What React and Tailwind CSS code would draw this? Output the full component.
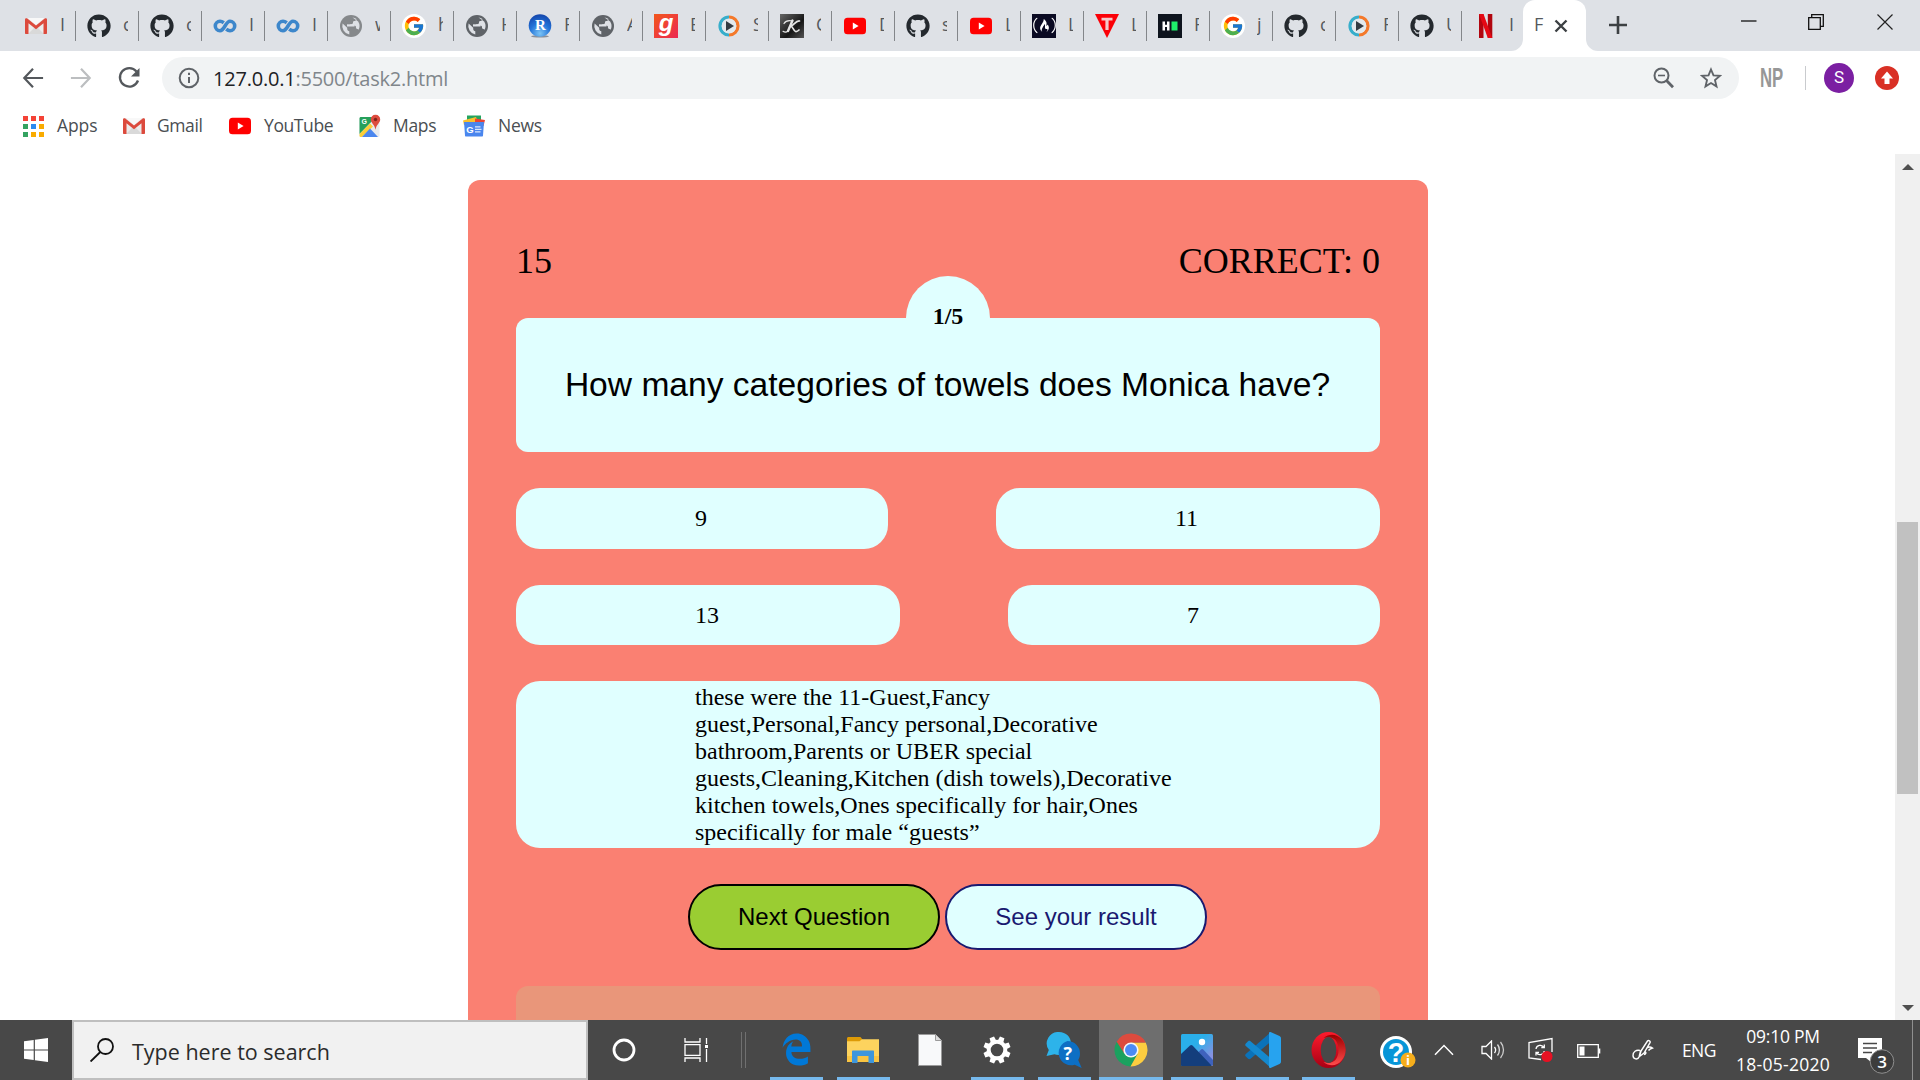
import React from "react";
import { FaGithub, FaEdgeLegacy, FaFreeCodeCamp } from "react-icons/fa6";
import { FcGoogle } from "react-icons/fc";

const ui = "font-['Open_Sans','Noto_Sans',sans-serif]";

/* ---------- favicons ---------- */
const Gmail = () => (
  <svg viewBox="0 0 24 24" className="size-6">
    <rect x="2" y="4" width="20" height="16" rx="1" fill="#ececec" />
    <path d="M4 20 12 12l8 8z" fill="#d9d9d9" />
    <path d="M4 4h16l-8 7z" fill="#f8f8f8" />
    <path d="M1 5.500C1 4.500 2 4 3 4.300l9 7.200 9-7.200c1-.3 2 .2 2 1.200V19c0 .6-.4 1-1 1h-2.500V9.200l-7.500 6-7.500-6V20H2c-.6 0-1-.4-1-1z" fill="#dc4a3d" />
  </svg>
);
const Github = () => <FaGithub className="size-6 text-[#24292e]" />;
const Coursera = () => (
  <svg viewBox="0 0 24 24" className="size-6" fill="none" stroke="#3d87cb" strokeWidth="3.600">
    <path d="M10.800 8.800C9.600 7.900 8.500 7.300 7 7.300a4.700 4.700 0 0 0 0 9.400c4.600 0 5.400-9.400 10-9.400a4.700 4.700 0 0 1 0 9.400c-1.500 0-2.700-.6-3.800-1.500" />
  </svg>
);
const Globe = ({ light }) => (
  <svg viewBox="0 0 24 24" className="size-6">
    <circle cx="12" cy="12" r="11" fill={light ? "#85888b" : "#5f6368"} />
    <path d="M3.600 9.500l4.600 4.300v1.200c0 1.200.9 2 2.100 2.200v3.300A8.800 8.800 0 0 1 3.600 9.500z" fill="#dee1e6" />
    <path d="M13.500 3.400c1.500.2 2.900.8 4 1.600-.2 1.300-1.100 2-2.400 2.100-.9.100-1.100.5-1.100 1.300 0 1.300-.7 1.700-2 1.800-.7 0-1 .4-1 1.400h4.200c1.200 0 1.800.7 1.800 1.900 0 1 .5 1.300 1.300 1.400.6.100 1 .4 1.300.9a8.800 8.800 0 0 0-.4-8.300" fill="#dee1e6" />
    <path d="M8 10.300h7.500v2.200H8z" fill="#dee1e6" />
  </svg>
);
const Google = () => (
  <span className="flex size-6 items-center justify-center rounded-full bg-white">
    <FcGoogle className="size-[22px]" />
  </span>
);
const RStudio = () => (
  <svg viewBox="0 0 24 24" className="size-6">
    <defs>
      <radialGradient id="rs" cx=".5" cy=".85" r=".9">
        <stop offset="0" stopColor="#7cc4f5" />
        <stop offset=".5" stopColor="#2273d8" />
        <stop offset="1" stopColor="#123fa5" />
      </radialGradient>
    </defs>
    <ellipse cx="12" cy="22.300" rx="9" ry="1.300" fill="#8a8f98" />
    <circle cx="12" cy="11.500" r="11.300" fill="url(#rs)" />
    <text x="12.500" y="16" textAnchor="middle" fontSize="15" fontWeight="700" fill="#fff" fontFamily="Liberation Serif, serif">R</text>
  </svg>
);
const Gaana = () => (
  <svg viewBox="0 0 24 24" className="size-6">
    <defs>
      <linearGradient id="ga" x1="0" y1="0" x2="1" y2="1">
        <stop offset="0" stopColor="#f2571c" />
        <stop offset="1" stopColor="#ec2852" />
      </linearGradient>
    </defs>
    <rect width="24" height="24" fill="url(#ga)" />
    <text x="12" y="16.500" textAnchor="middle" fontSize="24" fontWeight="700" fontStyle="italic" fill="#fff" fontFamily="Liberation Sans, sans-serif">g</text>
  </svg>
);
const Player = () => (
  <svg viewBox="0 0 24 24" className="size-6">
    <path d="M12 3A9 9 0 0 0 12 21" fill="none" stroke="#37aecb" strokeWidth="3.200" />
    <path d="M12 3A9 9 0 0 1 12 21" fill="none" stroke="#f4792b" strokeWidth="3.200" />
    <circle cx="12" cy="12" r="7.300" fill="#e3e9ec" />
    <path d="M9 7 17 12l-8 5z" fill="#333b41" />
  </svg>
);
const ScriptK = () => (
  <svg viewBox="0 0 24 24" className="size-6">
    <defs>
      <linearGradient id="kx" x1="0" y1="0" x2="1" y2="1">
        <stop offset="0" stopColor="#666" />
        <stop offset=".6" stopColor="#161616" />
        <stop offset="1" stopColor="#555" />
      </linearGradient>
    </defs>
    <rect width="24" height="24" fill="url(#kx)" />
    <g fill="none" stroke="#e6e6e6" strokeLinecap="round">
      <path d="M12.500 6.500 8 17" strokeWidth="2.400" />
      <path d="M19.500 7c-3-.5-5 3-8.500 5.500 2 0 2.500 4.500 4.500 5 1.500.3 2.500-.5 3.500-1.500" strokeWidth="1.700" />
      <path d="M4 9.500c2-3.500 6-3 8.500-2.500M8 17c-1.500 1.300-3.500 1.300-5 .3" strokeWidth="1.200" />
    </g>
  </svg>
);
const YouTube = () => (
  <svg viewBox="0 0 24 24" className="size-6">
    <rect x="1" y="3.800" width="22" height="16.400" rx="3.500" fill="#f00" />
    <path d="M9.800 8.600 15.600 12l-5.800 3.400z" fill="#fff" />
  </svg>
);
const FreeCodeCamp = () => (
  <span className="flex size-6 items-center justify-center bg-[#0a0a23]">
    <FaFreeCodeCamp className="size-[23px] text-white" />
  </span>
);
const Triangle = () => (
  <svg viewBox="0 0 24 24" className="size-6">
    <path d="M0 0h24L12 24z" fill="#fb0007" />
    <path d="M6.500 3.800h11v2.600h-3.900V16h-3.200V6.400H6.500z" fill="#f3c9ca" />
  </svg>
);
const Hacker = () => (
  <svg viewBox="0 0 24 24" className="size-6">
    <rect width="24" height="24" fill="#0e141e" />
    <path d="M4.500 7.500h2.500v3.300h2V7.500h2.500v9H9v-3.400H7v3.400H4.500z" fill="#fff" />
    <rect x="13.500" y="7.500" width="6" height="9" fill="#1ef06a" />
  </svg>
);
const Netflix = () => (
  <svg viewBox="0 0 24 24" className="size-6">
    <path d="M6 0h4.500v24L6 24zM14.800 0h4.500v24h-4.500z" fill="#b1060f" />
    <path d="M6 0h4.500l8.800 24h-4.500z" fill="#e50914" />
  </svg>
);

const tabs = [
  [Gmail, "I"], [Github, "c"], [Github, "c"], [Coursera, "I"], [Coursera, "I"],
  [() => <Globe light />, "w"], [Google, "h"], [Globe, "H"], [RStudio, "F"], [Globe, "A"],
  [Gaana, "E"], [Player, "S"], [ScriptK, "C"], [YouTube, "D"], [Github, "s"],
  [YouTube, "L"], [FreeCodeCamp, "L"], [Triangle, "L"], [Hacker, "F"], [Google, "j"],
  [Github, "c"], [Player, "F"], [Github, "U"], [Netflix, "I"],
];

function TabStrip() {
  return (
    <div className="flex h-[51px] w-full shrink-0 bg-[#dee1e6] pl-[12px]">
      {tabs.map(([Icon, letter], i) => (
        <div key={i} className="flex h-[51px] w-[63px] shrink-0 items-center">
          <div className={"h-[30px] w-[1px] " + (i ? "bg-[#83868a]" : "")} />
          <div className="ml-[11px] flex size-6 shrink-0 items-center"><Icon /></div>
          <div className={ui + " ml-[12px] h-[26px] w-[5px] overflow-hidden text-[18px] leading-[23px] text-[#55595d]"}>{letter}</div>
        </div>
      ))}
      <div className="relative -ml-px flex h-[51px] w-[63px] items-center rounded-t-[12px] bg-white pl-[11px]">
        <svg viewBox="0 0 12 12" className="absolute bottom-0 -left-[12px] size-3"><path d="M12 0v12H0A12 12 0 0 0 12 0" fill="#fff" /></svg>
        <svg viewBox="0 0 12 12" className="absolute bottom-0 -right-[12px] size-3"><path d="M0 0v12h12A12 12 0 0 1 0 0" fill="#fff" /></svg>
        <span className={ui + " w-[19px] pb-[3px] text-[18px] leading-[24px] text-[#55595d]"}>F</span>
        <svg viewBox="0 0 14 14" className="ml-px size-[14px]"><path d="M1.500 1.500l11 11m0-11l-11 11" stroke="#3c4043" strokeWidth="2.400" /></svg>
      </div>
      <svg viewBox="0 0 20 20" className="mt-[15px] ml-[22px] size-5"><path d="M10 1v18M1 10h18" stroke="#3c4043" strokeWidth="2.600" /></svg>
      <svg viewBox="0 0 16 16" className="mt-[12.500px] ml-[113px] size-4"><path d="M0 8h15.500" stroke="#111" strokeWidth="1.300" /></svg>
      <svg viewBox="0 0 16 16" className="mt-[14px] ml-[51px] size-4" fill="none" stroke="#111" strokeWidth="1.300"><path d="M.7 3.700h11.600v11.600H.7zM3.700 3.700V.7h11.600v11.600h-3" /></svg>
      <svg viewBox="0 0 16 16" className="mt-[13.500px] ml-[53px] size-4"><path d="M.5.5l15 15m0-15l-15 15" stroke="#222" strokeWidth="1.200" /></svg>
    </div>
  );
}

function Toolbar() {
  return (
    <div className="flex h-[54px] shrink-0 items-center pl-[22px]">
      <svg viewBox="0 0 24 24" className="size-[22px]" fill="none" stroke="#54585c" strokeWidth="2.400"><path d="M23 12H3M12 2 2.500 12 12 22" /></svg>
      <svg viewBox="0 0 24 24" className="ml-[26px] size-[22px]" fill="none" stroke="#bcbec0" strokeWidth="2.400"><path d="M1 12h20M12 2l9.500 10L12 22" /></svg>
      <svg viewBox="0 0 24 24" className="ml-[25px] size-[24px]" fill="none" stroke="#54585c" strokeWidth="2.300"><path d="M19.500 5.500A9.300 9.300 0 1 0 21 14.500" /><path d="M22.500 2v8.500H14z" fill="#54585c" stroke="none" /></svg>
      <div className="ml-[21px] flex h-[42px] w-[1577px] items-center rounded-full bg-[#f1f3f4] pl-[16px]">
        <svg viewBox="0 0 22 22" className="size-[22px]" fill="none" stroke="#5f6368" strokeWidth="2"><circle cx="11" cy="11" r="9.300" /><path d="M11 10v6M11 5.800v2.300" /></svg>
        <span className={ui + " ml-[13px] w-[234px] whitespace-nowrap pt-px text-[20px] tracking-[-0.22px] text-[#80868b]"}><span className="text-[#202124]">127.0.0.1</span>:5500/task2.html</span>
        <svg viewBox="0 0 22 22" className="ml-[1206px] size-[22px]" fill="none" stroke="#5f6368"><circle cx="8.500" cy="8.500" r="7" strokeWidth="2" /><path d="M5 8.500h7" strokeWidth="1.600" /><path d="M13.500 13.500l6.500 6.700" strokeWidth="2.800" /></svg>
        <svg viewBox="0 0 22 22" className="ml-[25px] size-[22px]" fill="none" stroke="#5f6368" strokeWidth="1.900"><path d="M11 2.500l2.500 5.900 6.300.5-4.800 4.200 1.500 6.300L11 16l-5.500 3.400L7 13.100 2.200 8.900l6.300-.5z" /></svg>
      </div>
      <span className="ml-[21px] w-[24px] origin-left scale-x-[0.62] font-['Liberation_Sans',sans-serif] text-[27px] leading-none font-bold text-[#979797]">NP</span>
      <span className="ml-[21px] h-[24px] w-px bg-[#c9cbce]" />
      <span className="ml-[18px] flex size-[30px] items-center justify-center rounded-full bg-[#7b1fa2] font-['Roboto',sans-serif] text-[17px] text-white">S</span>
      <svg viewBox="0 0 24 24" className="ml-[21px] size-6"><circle cx="12" cy="12" r="12" fill="#d93025" /><path d="M12 5.500l6 7h-3.500V18h-5v-5.500H6z" fill="#fff" /></svg>
    </div>
  );
}

const appColors = ["#f44336", "#f44336", "#f44336", "#34a361", "#2a8af0", "#f9ab00", "#34a361", "#f9ab00", "#f9ab00"];

function Bookmark({ icon, label, w, tight }) {
  return (
    <div className={"flex shrink-0 items-center " + w}>
      <div className="flex size-6 shrink-0 items-center justify-center">{icon}</div>
      <span className={ui + " whitespace-nowrap pb-[2px] text-[17.500px] leading-6 text-[#4a4e52] " + tight}>{label}</span>
    </div>
  );
}

function Bookmarks() {
  return (
    <div className="flex h-[42px] shrink-0 items-center pl-[21px]">
      <Bookmark label="Apps" w="w-[101px]" tight="ml-[12px] tracking-[-0.1px]" icon={
        <div className="grid grid-cols-3 gap-[3px]">{appColors.map((c, i) => <span key={i} className="size-[5px]" style={{ background: c }} />)}</div>
      } />
      <Bookmark label="Gmail" w="w-[106px]" tight="ml-[11px] tracking-[-0.4px]" icon={<Gmail />} />
      <Bookmark label="YouTube" w="w-[130px]" tight="ml-[12px] tracking-[-0.4px]" icon={<YouTube />} />
      <Bookmark label="Maps" w="w-[104px]" tight="ml-[11px] tracking-[-0.3px]" icon={
        <svg viewBox="0 0 24 24" className="size-6">
          <rect x="1.500" y="3" width="20" height="20" rx="1.500" fill="#e8eaed" />
          <path d="M1.500 4.500C1.500 3.500 2 3 3 3h15L1.500 20z" fill="#26a05b" />
          <path d="M1.500 20 12 9.500l3 3L4 23H3c-1 0-1.500-.5-1.500-1.500z" fill="#fbcf38" />
          <path d="M4 23l8-8.500L20 23z" fill="#4a86ee" />
          <text x="3.500" y="10" fontSize="7" fontWeight="700" fill="#fff" fontFamily="Liberation Sans, sans-serif">G</text>
          <path d="M17.500.8c2.900 0 4.700 2.100 4.700 4.700 0 3.600-3.900 4.700-4.700 10.300-.8-5.600-4.700-6.700-4.700-10.300 0-2.600 1.800-4.700 4.700-4.700z" fill="#dd4b3e" />
          <circle cx="17.500" cy="5.500" r="1.700" fill="#7d231b" />
        </svg>
      } />
      <Bookmark label="News" w="w-[100px]" tight="ml-[12px] tracking-[-0.3px]" icon={
        <svg viewBox="0 0 24 24" className="size-6">
          <path d="M5 1.500h14v8H5z" fill="#24a45f" />
          <path d="M1 6.500l13-3.500 3 8H2z" fill="#fbc02d" />
          <path d="M13 4.500l10 1.500L21.500 12H13z" fill="#ea4435" />
          <path d="M2 8h20l-1 13.500c0 .6-.4 1-1 1H4c-.6 0-1-.4-1-1z" fill="#4a86ee" />
          <text x="4.200" y="18.700" fontSize="9.500" fontWeight="700" fill="#fff" fontFamily="Liberation Sans, sans-serif">G</text>
          <path d="M13 12.800h5.500M13 15.300h6.500M13 17.800h5.500" stroke="#dbe7fc" strokeWidth="1.300" />
        </svg>
      } />
    </div>
  );
}

/* ---------- quiz page ---------- */
const Option = ({ children }) => (
  <div className="flex h-[60.500px] items-center rounded-[24px] bg-[#e0ffff] pt-px pr-[181px] pl-[179px]">{children}</div>
);

function Quiz() {
  return (
    <div className="mt-[33px] ml-[468px] h-[840px] w-[960px] shrink-0 rounded-t-[12px] bg-[#fa8072] px-[48px] font-['Liberation_Serif',serif] text-[24px] leading-[27px] text-black">
      <div className="flex h-[138px] justify-between pt-[60px] text-[36px] leading-[42px]">
        <span>15</span>
        <span>CORRECT: 0</span>
      </div>
      <div className="relative flex h-[134px] items-center justify-center rounded-[12px] bg-[#e0ffff] font-['Liberation_Sans',sans-serif] text-[33.600px] leading-[40px]">
        <div className="absolute -top-[42px] left-[390px] flex size-[84px] items-center justify-center rounded-full bg-[#e0ffff] pb-[3px] font-['Liberation_Serif',serif] text-[24px] leading-[27px] font-bold">1/5</div>
        <span className="relative pr-px whitespace-nowrap">How many categories of towels does Monica have?</span>
      </div>
      <div className="mt-[36px] flex justify-between">
        <Option>9</Option>
        <Option><span className="w-[24px]">11</span></Option>
      </div>
      <div className="mt-[36px] flex justify-between">
        <Option>13</Option>
        <Option>7</Option>
      </div>
      <div className="mt-[36px] flex h-[167px] items-center rounded-[24px] bg-[#e0ffff] px-[179px] pt-px whitespace-nowrap">
        <p>
          these were the 11-Guest,Fancy<br />
          guest,Personal,Fancy personal,Decorative<br />
          bathroom,Parents or UBER special<br />
          guests,Cleaning,Kitchen (dish towels),Decorative<br />
          kitchen towels,Ones specifically for hair,Ones<br />
          specifically for male “guests”
        </p>
      </div>
      <div className="mt-[36px] flex justify-center gap-[5px] pr-[2px] font-['Liberation_Sans',sans-serif]">
        <button className="h-[66px] w-[252px] rounded-full border-2 border-black bg-[#9acd32] pb-px pl-px">Next Question</button>
        <button className="h-[66px] w-[262px] rounded-full border-2 border-[#191970] bg-[#e0ffff] pb-px pl-px text-[#191970]">See your result</button>
      </div>
      <div className="mt-[36px] h-[34px] rounded-t-[12px] bg-[#e9967a]" />
    </div>
  );
}

function Scrollbar() {
  return (
    <div className="flex h-[866px] w-[25px] shrink-0 flex-col items-center bg-[#f0f0f0]">
      <svg viewBox="0 0 12 6" className="mt-[10px] h-[6px] w-[12px] shrink-0"><path d="M0 6 6 0l6 6z" fill="#505050" /></svg>
      <div className="mt-[352px] h-[272px] w-[21px] shrink-0 bg-[#c1c1c1]" />
      <svg viewBox="0 0 12 6" className="mt-[211px] h-[6px] w-[12px] shrink-0"><path d="M0 0l6 6 6-6z" fill="#505050" /></svg>
    </div>
  );
}

/* ---------- taskbar ---------- */
function TaskApp({ children, w = "w-[53px]", gap = "ml-[14px]", run = true, active }) {
  return (
    <div className={"flex h-[60px] shrink-0 flex-col items-center " + w + " " + gap + (active ? " bg-[#6e6e6e]" : "")}>
      <div className="flex h-[57px] items-center justify-center pt-[3px]">{children}</div>
      <div className={"h-[3px] w-full " + (run ? "bg-[#76b9ed]" : "")} />
    </div>
  );
}

const Chrome = () => (
  <svg viewBox="0 0 34 34" className="size-[34px]">
    <path d="M17 17 2.700 8.700A16.500 16.500 0 0 0 16.500 33.500L24 21z" fill="#1ba15f" />
    <path d="M17 9.500h14.700A16.500 16.500 0 0 1 16.500 33.500l7-12.500z" fill="#fdcd40" />
    <path d="M2.700 8.700A16.500 16.500 0 0 1 31.700 9.500H17L10 20z" fill="#dc4b3e" />
    <circle cx="17" cy="17" r="7.600" fill="#f4f6f8" />
    <circle cx="17" cy="17" r="6" fill="#4b8bf5" />
  </svg>
);

function Taskbar() {
  return (
    <div className="flex h-[60px] w-[1920px] shrink-0 items-start overflow-hidden bg-[#484848] text-white">
      <div className="flex h-[60px] w-[72px] shrink-0 items-center justify-center">
        <svg viewBox="0 0 24 24" className="size-6" fill="#fff"><path d="M0 3.300 9.700 2v9.400H0zM10.900 1.800 24 0v11.400H10.900zM0 12.600h9.700V22L0 20.700zM10.900 12.600H24V24l-13.100-1.800z" /></svg>
      </div>
      <div className="flex h-[60px] w-[516px] shrink-0 items-center border-2 border-[#bfbfbf] bg-[#f1f1f1] pl-[16px]">
        <svg viewBox="0 0 24 24" className="size-6" fill="none" stroke="#111" strokeWidth="1.800"><circle cx="15.500" cy="8.500" r="7.500" /><path d="M10.300 14 .6 23.500" /></svg>
        <span className={ui + " ml-[18px] pt-[3px] text-[21.500px] leading-[30px] whitespace-nowrap text-[#2b2b2b]"}>Type here to search</span>
      </div>
      <svg viewBox="0 0 24 24" className="mt-[18px] ml-[24px] size-6 shrink-0"><circle cx="12" cy="12" r="10" fill="none" stroke="#fff" strokeWidth="2.800" /></svg>
      <svg viewBox="0 0 24 24" className="mt-[17.500px] ml-[48px] size-6 shrink-0" fill="none" stroke="#fff" strokeWidth="1.300"><path d="M1 0v4h15V0M1 24v-4h15v4M1 6.600h15v10.800H1zM22.500 0v6M22.500 11v13" /><path d="M21 7h3v3h-3z" fill="#fff" stroke="none" /></svg>
      <div className="mt-[12px] ml-[33px] h-[36px] w-[5px] shrink-0 border-x border-[#707070]" />

      <TaskApp gap="ml-[24px]"><FaEdgeLegacy className="mr-px mb-px h-[33px] w-[31px] text-[#0078d7]" preserveAspectRatio="none" /></TaskApp>
      <TaskApp>
        <svg viewBox="0 0 32 28" className="mr-px h-[28px] w-[32px]"><path d="M1.500 1h12l2 2.500L13.500 6H0V2.500C0 1.600.6 1 1.500 1z" fill="#dd9a06" /><path d="M0 5.200h12.500l2.500-2h17V26H0z" fill="#fdd35e" /><path d="M0 20h32v5c0 .6-.4 1-1 1H1c-.6 0-1-.4-1-1z" fill="#f9c441" /><path d="M5 15.500c0-.6.400-1 1-1h20c.6 0 1 .4 1 1V27h-5.500v-7h-11v7H5z" fill="#3d96dc" /></svg>
      </TaskApp>
      <TaskApp run={false}>
        <svg viewBox="0 0 24 32" className="mr-px h-[32px] w-[24px]"><path d="M.5.5h17l6 6v25H.5z" fill="#f8f9fa" stroke="#9a9a9a" /><path d="M17.500.5v6h6" fill="#ddd" stroke="#9a9a9a" /></svg>
      </TaskApp>
      <TaskApp>
        <svg viewBox="0 0 28 28" className="mr-[2px] size-[28px]">
          <circle cx="14" cy="14" r="8.300" fill="none" stroke="#fff" strokeWidth="4" />
          {[22.500, 67.500, 112.500, 157.500, 202.500, 247.500, 292.500, 337.500].map((a) => <path key={a} d="M11.600 0.400h4.800l.6 5h-6z" fill="#fff" transform={`rotate(${a} 14 14)`} />)}
        </svg>
      </TaskApp>
      <TaskApp>
        <svg viewBox="0 0 36 36" className="mr-px size-[36px]">
          <path d="M13 0C20 0 25 5 25 11.500S20 23 13 23c-2-.2-3.500-.5-4.500-.8L.5 24l2.300-6A11.500 11.500 0 0 1 13 0z" fill="#2db3ea" />
          <path d="M21.500 9A12.400 12.400 0 0 1 34 21.500c0 2.500-.6 4.700-1.800 6.500l3.500 8-7-3.200A12.400 12.400 0 1 1 21.500 9z" fill="#0d6fc4" />
          <text x="21.800" y="28" textAnchor="middle" fontSize="18" fontWeight="700" fill="#fff" fontFamily="Open Sans, sans-serif">?</text>
        </svg>
      </TaskApp>
      <TaskApp w="w-[64px]" gap="ml-[8px]" active><Chrome /></TaskApp>
      <TaskApp gap="ml-[8px]" w="w-[52px]">
        <svg viewBox="0 0 32 32" className="size-[32px]"><defs><linearGradient id="ph" x1="0" y1="0" x2="1" y2="1"><stop offset=".4" stopColor="#2aafea" /><stop offset=".8" stopColor="#8592e2" /></linearGradient></defs><rect width="32" height="32" rx="1.500" fill="url(#ph)" /><path d="M14 22l6-6.500c.7-.7 1.500-.7 2.200 0L32 26v5H14z" fill="#3f62bd" /><path d="M0 20 9 11.500c.8-.7 1.700-.7 2.500 0L31 32H1c-.6 0-1-.4-1-1z" fill="#143e7c" /><circle cx="21" cy="8" r="3.200" fill="#fff" /></svg>
      </TaskApp>
      <TaskApp gap="ml-[13px]">
        <svg viewBox="0 0 36 36" className="size-[36px]"><path d="M26 0v9.500L5.500 26.800c-.8.600-1.700.6-2.400 0L.8 24.600c-.8-.8-.8-2 0-2.700z" fill="#0b72b9" /><path d="M26 36v-9.500L5.500 9.200c-.8-.6-1.700-.6-2.400 0L.8 11.400c-.8.8-.8 2 0 2.700z" fill="#1489cf" /><path d="M25.500 0 34.500 4c.9.500 1.500 1.300 1.500 2.300v23.400c0 1-.6 1.800-1.500 2.300l-9 4c-1 0-1.500-.5-1.500-1V1c0-.6.5-1 1.500-1z" fill="#27a3ef" /></svg>
      </TaskApp>
      <TaskApp gap="ml-[13px]">
        <svg viewBox="0 0 34 36" className="h-[36px] w-[35px]"><defs><linearGradient id="op" x1="0" y1="0" x2="0" y2="1"><stop offset="0" stopColor="#ff1b2d" /><stop offset="1" stopColor="#a70014" /></linearGradient><linearGradient id="op2" x1="0" y1="0" x2="0" y2="1"><stop offset="0" stopColor="#9c0000" /><stop offset="1" stopColor="#ff4b4b" /></linearGradient></defs><ellipse cx="17" cy="18" rx="17" ry="18" fill="url(#op)" /><path d="M12 6c10-8 22 0 22 12s-12 20-22 12c10 3 15-3 15-12S22 3 12 6z" fill="url(#op2)" /><ellipse cx="17" cy="18" rx="7.800" ry="13" fill="#484848" /></svg>
      </TaskApp>

      <svg viewBox="0 0 36 34" className="mt-[16px] ml-[25px] h-[34px] w-[36px] shrink-0"><circle cx="16" cy="16" r="16" fill="#fff" /><circle cx="16" cy="16" r="13" fill="#0796d8" /><text x="16" y="26" textAnchor="middle" fontSize="27" fontWeight="700" fill="#fff" fontFamily="Liberation Sans, sans-serif">?</text><circle cx="28" cy="24" r="7.500" fill="#f6ae1c" /><text x="28" y="29" textAnchor="middle" fontSize="13" fontWeight="700" fill="#fff" fontFamily="Open Sans, sans-serif">i</text></svg>
      <svg viewBox="0 0 20 12" className="mt-[24px] ml-[18px] h-[12px] w-[20px] shrink-0" fill="none" stroke="#fff" strokeWidth="1.500"><path d="M1 10.800 10 1.500l9 9.300" /></svg>
      <svg viewBox="0 0 24 20" className="mt-[20px] ml-[27px] h-[20px] w-[24px] shrink-0" fill="none" stroke="#fff" strokeWidth="1.300"><path d="M1 6.500h4L10.500 1v18L5 13.500H1z" /><path d="M13.500 7c1.300 1.700 1.300 4.300 0 6" /><path d="M16.500 4.500c2.500 3.200 2.500 7.800 0 11" stroke="#ddd" /><path d="M19.500 2c4 4.700 4 11.300 0 16" stroke="#ccc" /></svg>
      <svg viewBox="0 0 26 26" className="mt-[17px] ml-[23px] size-[26px] shrink-0" fill="none" stroke="#fff" strokeWidth="1.300"><path d="M13 22.500l-12-1.500V5.500L24 1.500V15" /><path d="M8 12a4.300 4.300 0 0 1 8-1.500M16.300 7.500v3h-3M16.300 14a4.300 4.300 0 0 1-8 1.500M8 18.500v-3h3" /><circle cx="19" cy="19.500" r="5.500" fill="#e81123" stroke="none" /></svg>
      <svg viewBox="0 0 24 14" className="mt-[24px] ml-[23px] h-[14px] w-[24px] shrink-0"><path d="M.7.7h20.600v12.600H.7z" fill="none" stroke="#fff" strokeWidth="1.300" /><path d="M2.500 2.500h5v9h-5zM22 4.500h1.300v5H22z" fill="#fff" /></svg>
      <svg viewBox="0 0 22 22" className="mt-[19px] ml-[31px] size-[22px] shrink-0" fill="none" stroke="#fff" strokeWidth="1.400"><path d="M9 12 15.500 2c1-1.300 3.300.2 2.500 1.700L12 14l-4.500 3.500zM8 11.500c-4-1-7 1.500-7 5 0 4 5 4.500 6 1.500.6-2 1-5 2-6.500M15 9c2.500-2 5.500 0 5.500 0s-3 1-4 2.500M13 13c1.500 0 1 2.500-1 2.500" /></svg>
      <span className={ui + " mt-[17px] ml-[28px] w-[34px] shrink-0 whitespace-nowrap text-[17.500px] leading-[26px] tracking-[-0.6px]"}>ENG</span>
      <div className={ui + " ml-[17px] flex w-[100px] shrink-0 flex-col items-center text-[17.500px] leading-[28px] whitespace-nowrap"}>
        <span className="pt-[2px] tracking-[-0.25px]">09:10 PM</span>
        <span className="tracking-[0.25px]">18-05-2020</span>
      </div>
      <div className="relative mt-[18px] ml-[25px] h-[36px] w-[38px] shrink-0">
        <svg viewBox="0 0 38 36" className="h-[36px] w-[38px]"><path d="M0 0h24v20h-11v4l-5-4H0z" fill="#fff" /><path d="M5 5.500h14M5 10h14M5 14.500h9" stroke="#484848" strokeWidth="1.300" /><circle cx="24" cy="23.500" r="11.800" fill="#3c3c3c" stroke="#8f8f8f" /></svg>
        <span className={ui + " absolute top-[11.500px] left-[18px] w-[12px] text-center text-[17px] leading-6 font-semibold"}>3</span>
      </div>
      <div className="ml-[16px] h-[60px] w-px shrink-0 bg-[#8f8f8f]" />
    </div>
  );
}

export default function App() {
  return (
    <div className="flex h-[1080px] w-[1920px] flex-col overflow-hidden bg-white">
      <TabStrip />
      <Toolbar />
      <div className="flex h-[915px] shrink-0 overflow-hidden">
        <div className="flex w-[1895px] shrink-0 flex-col">
          <Bookmarks />
          <div className="flex flex-1">
            <Quiz />
          </div>
        </div>
        <div className="flex w-[25px] shrink-0 items-end">
          <Scrollbar />
        </div>
      </div>
      <Taskbar />
    </div>
  );
}
